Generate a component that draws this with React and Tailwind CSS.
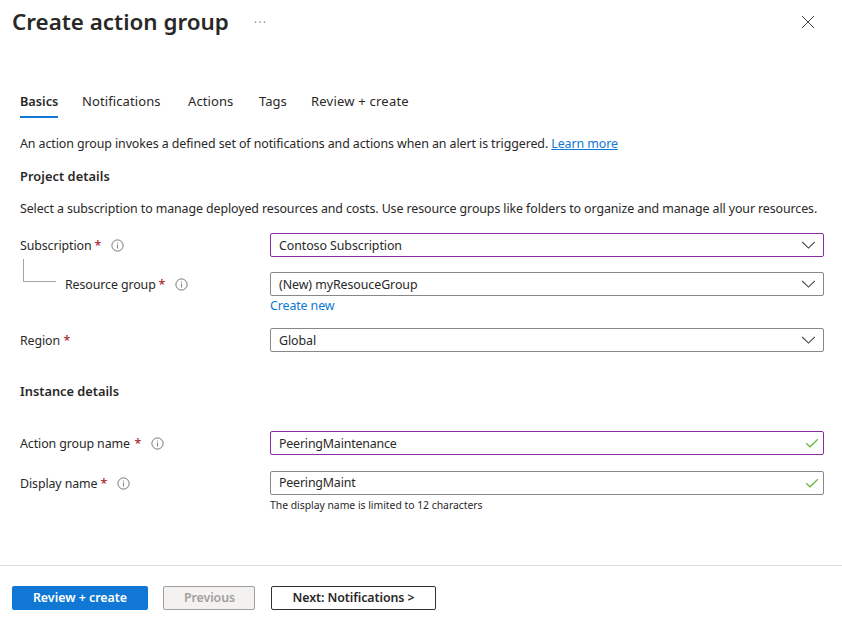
const Info = () => (
  <svg className="mb-[2px] ml-[9px] size-[13px] shrink-0" viewBox="0 0 13 13" fill="none">
    <circle cx="6.5" cy="6.5" r="5.6" stroke="#777572" strokeWidth="1" />
    <path d="M6.5 5.5V9.4M6.5 3.4V4.5" stroke="#8a8886" strokeWidth="1.1" />
  </svg>
);

const Chevron = () => (
  <svg className="size-[14px] shrink-0" viewBox="0 0 14 14" fill="none">
    <path d="M1.2 4L7.5 10.1L13.8 4" stroke="#484644" strokeWidth="1.05" />
  </svg>
);

const Check = () => (
  <svg className="size-[14px] shrink-0" viewBox="0 0 14 14" fill="none">
    <path d="M1.2 7.2L5 10.8L12.8 3.2" stroke="#6bb344" strokeWidth="1.2" />
  </svg>
);

const Label = ({ text, info = true, width }) => (
  <div className="flex h-6 w-[250px] shrink-0 items-center pt-[2px] tracking-[-0.1px]">
    <span className={`${width} whitespace-nowrap`}>{text}</span>
    <span className="w-[7px] text-[12.4px] font-medium text-[#a4262c]">*</span>
    {info && <Info />}
  </div>
);

const Field = ({ value, active, valid, textClass = "pt-[2px] tracking-[-0.07px]" }) => (
  <div
    className={`flex h-6 w-[554px] shrink-0 items-center justify-between rounded-[2px] border pl-2 ${
      active ? "border-[#8a2da5]" : "border-[#8a8886]"
    } ${valid ? "pr-[4px]" : "pr-[8px]"}`}
  >
    <span className={`whitespace-nowrap ${textClass}`}>{value}</span>
    {valid ? <Check /> : <Chevron />}
  </div>
);

export default function App() {
  return (
    <main className="flex h-[627px] w-[842px] flex-col overflow-hidden bg-white font-['Noto_Sans','Open_Sans',sans-serif] text-[12.4px] leading-[18px] text-[#292827]">
      <header className="flex h-[44px] items-center pl-3 pr-[27px]">
        <h1 className="w-[241px] whitespace-nowrap text-[22.4px] font-semibold leading-7">Create action group</h1>
        <svg className="h-3 w-[14px]" viewBox="0 0 14 12" fill="#605e5c">
          <rect x="2" y="5.5" width="1.2" height="1.2" />
          <rect x="6.4" y="5.5" width="1.2" height="1.2" />
          <rect x="10.8" y="5.5" width="1.2" height="1.2" />
        </svg>
        <svg className="ml-auto size-[14px]" viewBox="0 0 14 14" fill="none">
          <path d="M1 1L13 13M13 1L1 13" stroke="#484644" strokeWidth="1" />
        </svg>
      </header>

      <nav className="mt-[48px] flex h-[26px] whitespace-nowrap pl-5 text-[13px] leading-[19px]">
        <span className="mr-6 w-[38px] border-b-2 border-[#1078d4] text-[12.7px] font-semibold">Basics</span>
        <span className="w-[106px] tracking-[0.1px]">Notifications</span>
        <span className="w-[71px] tracking-[0.1px]">Actions</span>
        <span className="w-[52px]">Tags</span>
        <span className="tracking-[0.22px]">Review + create</span>
      </nav>

      <section className="flex flex-col whitespace-nowrap pl-5">
        <p className="mt-[17px] h-[18px] tracking-[-0.08px]">
          An action group invokes a defined set of notifications and actions when an alert is triggered.{" "}
          <a className="text-[#1078d4] underline">Learn more</a>
        </p>
        <h2 className="mt-[14px] text-[12.8px] font-semibold tracking-[0.06px]">Project details</h2>
        <p className="mt-[15px] tracking-[-0.095px]">
          Select a subscription to manage deployed resources and costs. Use resource groups like folders to organize and manage all your resources.
        </p>

        <div className="mt-[15px] flex">
          <Label text="Subscription" width="w-[74.5px]" />
          <Field value="Contoso Subscription" active />
        </div>
        <div className="flex">
          <div className="ml-[3px] mt-[2px] h-[23px] w-[33px] shrink-0 border-b border-l border-[#a6a4a2]" />
          <div className="ml-[9px] mt-[15px] w-[205px] shrink-0">
            <Label text="Resource group" width="w-[93.5px]" />
          </div>
          <div className="mt-[15px]">
            <Field value="(New) myResouceGroup" />
          </div>
        </div>
        <a className="ml-[250px] mt-px h-[18px] tracking-[-0.1px] text-[#1078d4]">Create new</a>
        <div className="mt-[13px] flex">
          <Label text="Region" info={false} width="w-[43.5px]" />
          <Field value="Global" />
        </div>

        <h2 className="mt-[30px] text-[12.8px] font-semibold">Instance details</h2>
        <div className="mt-[31px] flex">
          <Label text="Action group name" width="w-[114.5px]" />
          <Field value="PeeringMaintenance" active valid textClass="pt-[2px] tracking-[-0.18px]" />
        </div>
        <div className="mt-[16px] flex">
          <Label text="Display name" width="w-[80.5px]" />
          <Field value="PeeringMaint" valid textClass="tracking-[-0.18px]" />
        </div>
        <p className="ml-[250px] mt-[2px] text-[10.4px] leading-4 tracking-[-0.02px]">The display name is limited to 12 characters</p>
      </section>

      <footer className="mt-[52px] flex border-t border-[#dddbda] pl-3 pt-5 font-semibold">
        <button className="mr-[15px] h-6 w-[136px] rounded-[2px] bg-[#1078d4] text-white">Review + create</button>
        <button className="mr-4 h-6 w-[92px] rounded-[2px] border border-[#a19f9d] bg-[#f3f2f1] pl-px tracking-[-0.1px] text-[#a19f9d]">Previous</button>
        <button className="h-6 w-[165px] rounded-[2px] border border-[#323130] tracking-[-0.07px]">Next: Notifications &gt;</button>
      </footer>
    </main>
  );
}
